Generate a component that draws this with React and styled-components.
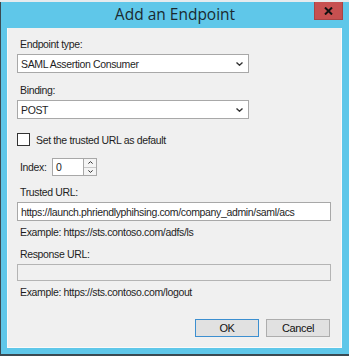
import React from "react";
import styled, { createGlobalStyle } from "styled-components";

const GlobalStyle = createGlobalStyle`
  html, body {
    margin: 0;
    padding: 0;
    background: #e9edf0;
  }
  body {
    font-family: "Liberation Sans", Arial, sans-serif;
    font-size: 10.5px;
    letter-spacing: -0.35px;
    color: #1e1e1e;
  }
`;

const Page = styled.div`
  width: 349px;
  height: 356px;
  display: flex;
  flex-direction: column;
  overflow: hidden;
`;

const BehindStrip = styled.div`
  height: 2px;
  background: #e6ebee;
`;

const Window = styled.div`
  flex: 1;
  display: flex;
  flex-direction: column;
  background: #5fc7e9;
  border-left: 1px solid #3b4a52;
  border-bottom: 2px solid #3b4a52;
  padding: 0 7px 6px 6px;
`;

const TitleBar = styled.div`
  height: 26px;
  display: flex;
  align-items: flex-start;
  margin-right: -1px;
`;

const Title = styled.div`
  flex: 1;
  text-align: center;
  padding-left: 29px;
  line-height: 25px;
  font-family: "Open Sans", "Liberation Sans", sans-serif;
  font-size: 15.5px;
  letter-spacing: 0;
  color: #1b2a30;
`;

const CloseButton = styled.div`
  width: 29px;
  height: 18px;
  background: #c75050;
  border: 1px solid #a94444;
  border-top: none;
  box-sizing: border-box;
  display: flex;
  align-items: center;
  justify-content: center;
`;

const Client = styled.div`
  flex: 1;
  background: #f0f0f0;
  border: 1px solid #fafafa;
  border-top: none;
  padding: 9px 0 0 9px;
  display: flex;
  flex-direction: column;
  align-items: flex-start;
`;

const Label = styled.div`
  line-height: 14px;
  margin-top: ${(p) => p.$top || 0}px;
  padding-left: 3px;
  white-space: nowrap;
`;

const Select = styled.div`
  width: 232px;
  height: 19px;
  box-sizing: border-box;
  margin-top: 3px;
  background: #fff;
  border: 1px solid #a8a8a8;
  display: flex;
  align-items: center;
  justify-content: space-between;
  padding: 0 5px 0 3px;
`;

const TextBox = styled.div`
  width: ${(p) => p.$width || 314}px;
  height: ${(p) => p.$height || 19}px;
  box-sizing: border-box;
  margin-top: 3px;
  background: ${(p) => (p.$disabled ? "#f0f0f0" : "#fff")};
  border: 1px solid ${(p) => (p.$disabled ? "#b4b4b4" : "#a8a8a8")};
  display: flex;
  align-items: center;
  padding: 0 3px;
  white-space: nowrap;
  overflow: hidden;
`;

const CheckRow = styled.label`
  display: flex;
  align-items: center;
  gap: 6px;
  margin-top: 14px;
  height: 13px;
`;

const CheckBox = styled.span`
  width: 13px;
  height: 13px;
  box-sizing: border-box;
  border: 1px solid #333;
  background: #fff;
`;

const IndexRow = styled.div`
  display: flex;
  align-items: center;
  margin-top: 12px;
`;

const IndexLabel = styled.span`
  padding-left: 3px;
  width: 32px;
`;

const SpinInput = styled.div`
  width: 31px;
  height: 18px;
  box-sizing: border-box;
  background: #fff;
  border: 1px solid #a8a8a8;
  border-right: none;
  padding: 1px 0 0 3px;
  line-height: 14px;
`;

const Spinner = styled.div`
  width: 14px;
  height: 18px;
  box-sizing: border-box;
  border: 1px solid #a8a8a8;
  background: #fff;
  display: flex;
  flex-direction: column;
`;

const SpinButton = styled.div`
  flex: 1;
  display: flex;
  align-items: center;
  justify-content: center;
  background: #f4f4f4;
  border-bottom: ${(p) => (p.$top ? "1px solid #c8c8c8" : "none")};
`;

const ButtonRow = styled.div`
  align-self: stretch;
  display: flex;
  justify-content: flex-end;
  gap: 7px;
  margin-top: 20px;
  padding-right: 11px;
`;

const Button = styled.div`
  width: 64px;
  height: 18px;
  box-sizing: border-box;
  background: #e1e1e1;
  border: 1px solid ${(p) => (p.$default ? "#3c8fd0" : "#adadad")};
  display: flex;
  align-items: center;
  justify-content: center;
  font-size: 11px;
  color: #111;
`;

const Chevron = ({ up, w = 7, h = 4 }) => (
  <svg width={w} height={h} viewBox="0 0 7 4">
    <polyline
      points={up ? "0.5,3.5 3.5,0.8 6.5,3.5" : "0.5,0.5 3.5,3.2 6.5,0.5"}
      fill="none"
      stroke="#333"
      strokeWidth="1.4"
    />
  </svg>
);

const App = () => (
  <>
    <GlobalStyle />
    <Page>
      <BehindStrip />
      <Window>
        <TitleBar>
          <Title>Add an Endpoint</Title>
          <CloseButton>
            <svg width="9" height="8" viewBox="0 0 9 8">
              <path d="M1 0.5 L8 7.5 M8 0.5 L1 7.5" stroke="#111" strokeWidth="2" />
            </svg>
          </CloseButton>
        </TitleBar>
        <Client>
          <Label>Endpoint type:</Label>
          <Select>
            <span>SAML Assertion Consumer</span>
            <Chevron />
          </Select>
          <Label $top={10}>Binding:</Label>
          <Select>
            <span>POST</span>
            <Chevron />
          </Select>
          <CheckRow>
            <CheckBox />
            <span>Set the trusted URL as default</span>
          </CheckRow>
          <IndexRow>
            <IndexLabel>Index:</IndexLabel>
            <SpinInput>0</SpinInput>
            <Spinner>
              <SpinButton $top>
                <Chevron up w={5} h={3} />
              </SpinButton>
              <SpinButton>
                <Chevron w={5} h={3} />
              </SpinButton>
            </Spinner>
          </IndexRow>
          <Label $top={9}>Trusted URL:</Label>
          <TextBox>https://launch.phriendlyphihsing.com/company_admin/saml/acs</TextBox>
          <Label $top={4}>Example: https://sts.contoso.com/adfs/ls</Label>
          <Label $top={8}>Response URL:</Label>
          <TextBox $disabled $height={17} />
          <Label $top={4}>Example: https://sts.contoso.com/logout</Label>
          <ButtonRow>
            <Button $default>OK</Button>
            <Button>Cancel</Button>
          </ButtonRow>
        </Client>
      </Window>
    </Page>
  </>
);

export default App;
